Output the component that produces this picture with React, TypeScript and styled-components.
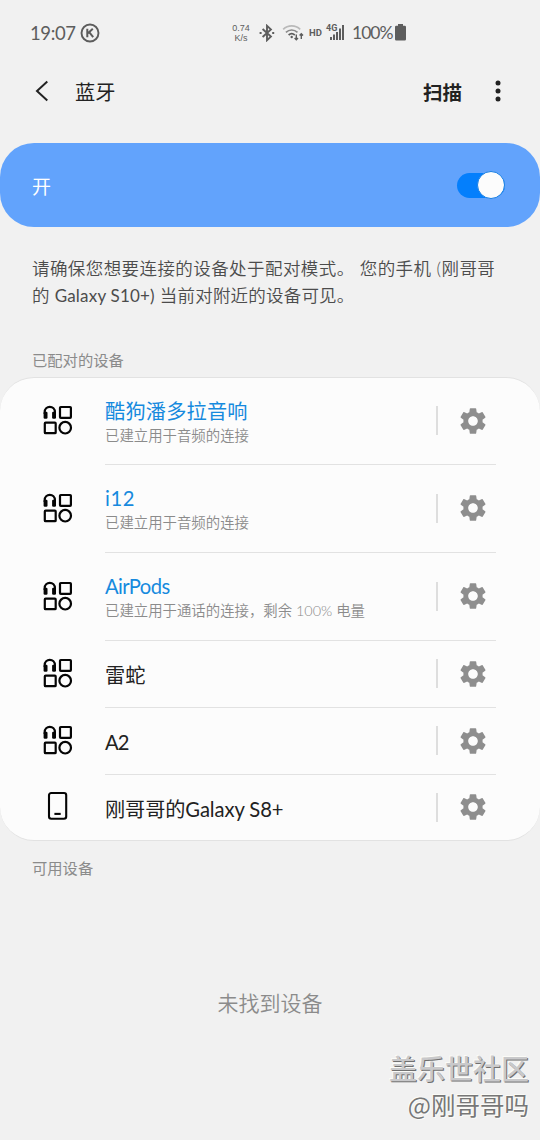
import React from "react"
import styled, { createGlobalStyle } from "styled-components"
import { MdSettings } from "react-icons/md"

interface Device {
    name: string,
    status?: string,
    type: 'audio' | 'phone',
    height: number,
    spacing?: number,
}

const devices: Device[] = [
    { name: '酷狗潘多拉音响', status: '已建立用于音频的连接', type: 'audio', height: 87, spacing: 0.2 },
    { name: 'i12', status: '已建立用于音频的连接', type: 'audio', height: 88, spacing: 0.6 },
    { name: 'AirPods', status: '已建立用于通话的连接，剩余 100% 电量', type: 'audio', height: 88, spacing: -0.6 },
    { name: '雷蛇', type: 'audio', height: 67 },
    { name: 'A2', type: 'audio', height: 67, spacing: -1 },
    { name: '刚哥哥的Galaxy S8+', type: 'phone', height: 65, spacing: -0.1 },
]

const AudioIcon = () => (
    <svg width="30" height="30" viewBox="0 0 30 30" fill="none" stroke="#050505" strokeWidth="2.2">
        <path d="M1.7 9V7a5.1 5.2 0 0 1 10.2 0V9" />
        <rect x="0.6" y="6.8" width="3.9" height="7" rx="1.2" fill="#050505" stroke="none" />
        <rect x="9.1" y="6.8" width="3.9" height="7" rx="1.2" fill="#050505" stroke="none" />
        <rect x="17" y="2" width="10.9" height="10.8" rx="0.8" />
        <rect x="1.8" y="17.6" width="10.9" height="10.6" rx="0.8" />
        <circle cx="22.2" cy="22.7" r="5.8" />
    </svg>
)

const PhoneIcon = () => (
    <svg width="30" height="30" viewBox="0 0 30 30" fill="none" stroke="#050505" strokeWidth="2.1">
        <rect x="6" y="2" width="17.2" height="25.8" rx="2.2" />
        <path d="M11.4 22.9h6.3" />
    </svg>
)

const DeviceRow = (props: Device) => {
    return (
        <Row $height={props.height}>
            <DeviceIcon>{props.type === 'audio' ? <AudioIcon /> : <PhoneIcon />}</DeviceIcon>
            <RowBody>
                <DeviceInfo>
                    <DeviceName $active={!!props.status} $spacing={props.spacing || 0}>{props.name}</DeviceName>
                    {props.status && <DeviceStatus>{props.status}</DeviceStatus>}
                </DeviceInfo>
                <Separator />
                <SettingsButton aria-label="settings"><MdSettings size={32} /></SettingsButton>
            </RowBody>
        </Row>
    )
}

const StatusIcons = () => (
    <>
        <svg width="16" height="18" viewBox="0 0 16 18" fill="none" stroke="#5d5d5d" strokeWidth="1.9">
            <path d="M3.6 5l8.3 7.6L8 16.2V1.8l3.9 3.6L3.6 13" />
            <path d="M0.6 9h2M13.2 9h2" strokeWidth="2" />
        </svg>
        <svg width="22" height="18" viewBox="0 0 22 18" fill="none" strokeWidth="1.7">
            <path d="M1.2 5.4C6 .8 13.4 .8 18.2 5.4" stroke="#b9b9b9" />
            <path d="M3.9 8.3c3.4-3.1 8.2-3.1 11.6 0" stroke="#8a8a8a" />
            <path d="M6.6 11c1.9-1.6 4.3-1.6 6.2 0" stroke="#5d5d5d" />
            <circle cx="9.7" cy="13" r="1.2" fill="#5d5d5d" />
            <path d="M14.3 10.5v5M12.6 14l1.7 1.8L16 14M19.3 15V9.8M17.6 11.6l1.7-1.8 1.7 1.8" stroke="#5d5d5d" strokeWidth="1.4" />
        </svg>
    </>
)

export default function App() {
    return (
        <Screen>
            <GlobalStyle />
            <StatusBar>
                <Clock>19:07</Clock>
                <svg width="20" height="20" viewBox="0 0 20 20" fill="none" stroke="#5d5d5d" strokeWidth="1.9">
                    <circle cx="10" cy="10" r="8.5" />
                    <path d="M7.3 5.8v8.4M12.8 5.8L8 10.2M9.2 9.2l4 5" strokeWidth="2" />
                </svg>
                <StatusRight>
                    <NetSpeed>
                        <NetLine>0.74</NetLine>
                        <NetLine>K/s</NetLine>
                    </NetSpeed>
                    <StatusIcons />
                    <HdLabel>HD</HdLabel>
                    <Signal>
                        <SignalLabel>4G</SignalLabel>
                        <svg width="15" height="17" viewBox="0 0 15 17" fill="#5d5d5d">
                            <path d="M0 13h2v3H0zM3 10.5h2V16H3zM6 8h2v8H6zM9 4.5h2V16H9zM12 1h2v15h-2z" />
                        </svg>
                    </Signal>
                    <Battery>100%</Battery>
                    <svg width="11" height="17" viewBox="0 0 11 17" fill="#5d5d5d">
                        <path d="M3 0h5v1.7h1.8q1.2 0 1.2 1.2v12.4q0 1.2-1.2 1.2H1.2Q0 16.5 0 15.3V2.9q0-1.2 1.2-1.2H3z" />
                    </svg>
                </StatusRight>
            </StatusBar>
            <Header>
                <svg width="14" height="22" viewBox="0 0 14 22" fill="none" stroke="#222" strokeWidth="2">
                    <path d="M12.3 1.6L2 11l10.3 9.4" />
                </svg>
                <Title>蓝牙</Title>
                <ScanButton>扫描</ScanButton>
                <svg width="6" height="22" viewBox="0 0 6 22" fill="#222">
                    <circle cx="3" cy="3" r="2.5" />
                    <circle cx="3" cy="11" r="2.5" />
                    <circle cx="3" cy="19" r="2.5" />
                </svg>
            </Header>
            <SwitchBanner>
                <BannerLabel>开</BannerLabel>
                <Track><Thumb /></Track>
            </SwitchBanner>
            <Description>
                <Line $spacing={0.42}>请确保您想要连接的设备处于配对模式。 您的手机 (刚哥哥</Line>
                <Line $spacing={0.2}>的 <Latin>Galaxy S10+)</Latin> 当前对附近的设备可见。</Line>
            </Description>
            <PairedLabel>已配对的设备</PairedLabel>
            <Card>
                {devices.map((device, index) => <DeviceRow key={index} {...device} />)}
            </Card>
            <AvailableLabel>可用设备</AvailableLabel>
            <EmptyText>未找到设备</EmptyText>
            <Watermark>
                <WatermarkTitle>盖乐世社区</WatermarkTitle>
                <WatermarkUser>@刚哥哥吗</WatermarkUser>
            </Watermark>
        </Screen>
    )
}

const GlobalStyle = createGlobalStyle`
    * {
        box-sizing: border-box;
    }
    body {
        margin: 0;
        background-color: #f1f1f1;
    }
    svg {
        display: block;
        flex-shrink: 0;
    }
`

const Screen = styled.div`
    position: relative;
    display: flex;
    flex-direction: column;
    width: 540px;
    height: 1140px;
    overflow: hidden;
    background-color: #f1f1f1;
    color: #222;
    font-family: Lato, "Noto Sans CJK SC", sans-serif;
    font-weight: 350;
    white-space: nowrap;
`

const StatusBar = styled.div`
    display: flex;
    align-items: center;
    height: 65px;
    padding: 0 134px 0 30px;
    color: #5d5d5d;
`

const Clock = styled.div`
    width: 50px;
    font-size: 18.5px;
    font-weight: 400;
    letter-spacing: -0.4px;
`

const StatusRight = styled.div`
    display: flex;
    align-items: center;
    margin-left: auto;
`

const NetSpeed = styled.div`
    display: flex;
    flex-direction: column;
    width: 28px;
    padding-right: 8px;
    font-family: "Liberation Sans", sans-serif;
    font-size: 9px;
    font-weight: 400;
    text-align: center;

    & + svg {
        margin-right: 7px;
    }
`

const NetLine = styled.div`
    height: 10px;
    line-height: 10px;
`

const HdLabel = styled.div`
    width: 18px;
    margin-left: 5px;
    font-family: Roboto, sans-serif;
    font-size: 9.5px;
    font-weight: 700;
`

const Signal = styled.div`
    display: flex;
    align-items: center;
    margin-right: 7px;
`

const SignalLabel = styled.div`
    width: 12px;
    margin: -9px -8px 0 -1px;
    font-family: Roboto, sans-serif;
    font-size: 9px;
    font-weight: 700;
`

const Battery = styled.div`
    width: 43px;
    font-size: 17.5px;
    font-weight: 400;
    letter-spacing: -1px;
`

const Header = styled.div`
    display: flex;
    align-items: center;
    height: 52px;
    padding: 0 39px 0 35px;
`

const Title = styled.div`
    margin-left: 26px;
    font-size: 20.2px;
    font-weight: 400;
`

const ScanButton = styled.div`
    margin-left: auto;
    margin-right: 33px;
    font-size: 19.5px;
    font-weight: 700;
`

const SwitchBanner = styled.div`
    display: flex;
    align-items: center;
    justify-content: space-between;
    height: 84px;
    margin-top: 26.4px;
    padding: 0 35px 0 32px;
    border-radius: 34px;
    background-color: #62a3fc;
`

const BannerLabel = styled.div`
    color: #fff;
    font-size: 19px;
    font-weight: 400;
`

const Track = styled.div`
    display: flex;
    align-items: center;
    justify-content: flex-end;
    width: 48px;
    height: 25px;
    border-radius: 13px;
    background-color: #047ffc;
`

const Thumb = styled.div`
    flex-shrink: 0;
    width: 28px;
    height: 28px;
    border: 1px solid #187fe4;
    border-radius: 50%;
    background-color: #fcfcfc;
`

const Description = styled.div`
    margin-top: 27.6px;
    padding-left: 32px;
    color: #4c4c4c;
    font-size: 17.5px;
`

const Line = styled.div<{ $spacing: number }>`
    height: 27px;
    line-height: 27px;
    letter-spacing: ${({ $spacing }) => $spacing}px;
`

const Latin = styled.span`
    font-weight: 400;
    font-size: 17px;
`

const SectionLabel = styled.div`
    padding-left: 32px;
    color: #8b8b8b;
    font-size: 15.3px;
    font-weight: 400;
    line-height: 20px;
`

const PairedLabel = styled(SectionLabel)`
    margin-top: 41px;
`

const AvailableLabel = styled(SectionLabel)`
    margin-top: 17px;
`

const Card = styled.div`
    margin-top: 7px;
    border-top: 1px solid #e2e2e2;
    border-bottom: 1px solid #e2e2e2;
    border-radius: 34px;
    background-color: #fcfcfc;
`

const RowBody = styled.div`
    display: flex;
    align-items: center;
    width: 391px;
    border-bottom: 1px solid #e2e2e2;
`

const Row = styled.div<{ $height: number }>`
    display: flex;
    height: ${({ $height }) => $height}px;
    padding-left: 43px;

    &:last-child ${RowBody} {
        border-bottom: 0;
    }
`

const DeviceIcon = styled.div`
    display: flex;
    align-items: center;
    width: 62px;
    padding-bottom: 2px;
`

const DeviceInfo = styled.div`
    display: flex;
    flex-direction: column;
    flex: 1;
    padding-top: 3px;
`

const DeviceName = styled.div<{ $active: boolean, $spacing: number }>`
    color: ${({ $active }) => ($active ? '#168ade' : '#222')};
    font-size: 20.2px;
    font-weight: 400;
    line-height: 26px;
    letter-spacing: ${({ $spacing }) => $spacing}px;
`

const DeviceStatus = styled.div`
    color: #8b8b8b;
    font-size: 14.4px;
    line-height: 23px;
`

const Separator = styled.div`
    width: 2px;
    height: 29px;
    background-color: #dedede;
`

const SettingsButton = styled.div`
    margin: 0 7px 0 19px;
    color: #8e8e8e;
`

const EmptyText = styled.div`
    margin-top: 110px;
    color: #8b8b8b;
    font-size: 21px;
    line-height: 30px;
    text-align: center;
`

const Watermark = styled.div`
    position: absolute;
    right: 11px;
    bottom: 17px;
    display: flex;
    flex-direction: column;
    align-items: flex-end;
    color: #777;
    font-family: "Noto Sans CJK SC", sans-serif;
    font-weight: 400;
    text-shadow: -1px -1px 0 #fbfbf7, 1px 1px 0 #fbfbf7;
`

const WatermarkTitle = styled.div`
    color: #c9c9cb;
    font-size: 28px;
    font-weight: 500;
    line-height: 37px;
    text-shadow: 1px 1px 0 #707070, -1px -1px 0 #fbfbf7;
`

const WatermarkUser = styled.div`
    font-size: 24.5px;
    line-height: 36px;
`
